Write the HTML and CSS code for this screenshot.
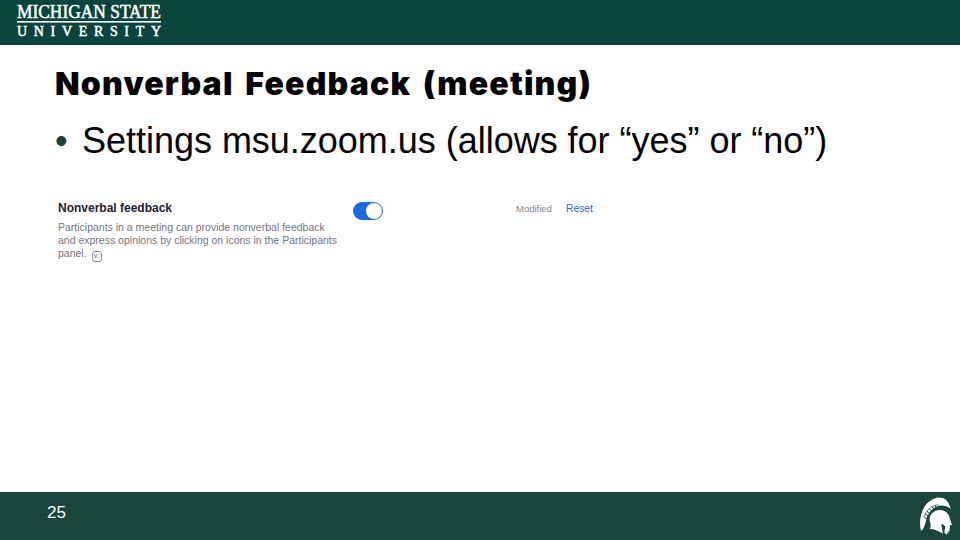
FILE: index.html
```
<!DOCTYPE html>
<html lang="en">
<head>
  <meta charset="UTF-8">
  <meta name="viewport" content="width=device-width, initial-scale=1.0">
  <title>Nonverbal Feedback (meeting)</title>
  <link rel="stylesheet" href="styles.css">
</head>
<body>
  <header>
    <svg class="wordmark" width="180" height="45" viewBox="0 0 180 45">
      <text class="name" x="17" y="18" textLength="144" lengthAdjust="spacingAndGlyphs">MICHIGAN STATE</text>
      <rect x="17" y="21" width="144" height="1.6"/>
      <text class="sub" x="17" y="35.5" textLength="144">UNIVERSITY</text>
    </svg>
  </header>

  <main>
    <h1>Nonverbal Feedback (meeting)</h1>
    <ul>
      <li>Settings msu.zoom.us (allows for “yes” or “no”)</li>
    </ul>

    <section class="setting">
      <div class="info">
        <h2>Nonverbal feedback</h2>
        <p>
          Participants in a meeting can provide nonverbal feedback<br>
          and express opinions by clicking on icons in the Participants<br>
          panel. <span class="badge">v:</span>
        </p>
      </div>
      <div class="toggle"><span class="knob"></span></div>
      <span class="modified">Modified</span>
      <a class="reset">Reset</a>
    </section>
  </main>

  <footer>
    <span class="page">25</span>
    <svg class="helmet" width="60" height="47" viewBox="0 21 180 141">
      <path d="M63 138 C59 122 59 102 65 84 C72 61 88 43 111 38 C131 35 146 45 152 71 C137 60 119 58 106 66 C91 75 81 91 78 107 C75 120 72 130 63 138 Z"/>
      <path d="M89 107 C87 88 102 75 120 75 C138 75 148 88 150 103 L156 120 L150 120 L149 135 L140 149 L133 143 L136 124 L127 117 L124 119 L129 146 C115 138 101 132 90 132 C94 122 91 115 89 107 Z"/>
      <path class="gap" d="M73 97 L81 101 M76 88 L85 93 M81 79 L89 85 M88 71 L95 78 M96 65 L102 72 M105 60 L109 67"/>
      <path class="crest" d="M71 97 C78 77 93 62 116 59"/>
    </svg>
  </footer>
</body>
</html>
```

FILE: styles.css
```
* {
  box-sizing: border-box;
}
body {
  margin: 0;
  height: 540px;
  display: flex;
  flex-direction: column;
  overflow: hidden;
  background: #fff;
  color: #000;
  font-family: "Liberation Sans", Arial, sans-serif;
}
header {
  height: 45px;
  background: #08453a;
}
.wordmark {
  display: block;
  fill: #fff;
  stroke: #fff;
  stroke-width: 0.5px;
  font-family: "Liberation Serif", serif;
}
.wordmark rect {
  stroke: none;
}
.name {
  font-size: 19px;
}
.sub {
  font-size: 14px;
}
main {
  flex: 1;
  padding: 20px 55px 0;
}
h1 {
  margin: 0;
  font-family: Inter, "Liberation Sans", sans-serif;
  font-size: 32px;
  font-weight: 900;
  line-height: 38px;
  letter-spacing: 1.2px;
  word-spacing: 4px;
  white-space: nowrap;
}
ul {
  margin: 18px 0 0;
  padding: 0;
  list-style: none;
}
li {
  display: flex;
  font-size: 36px;
  line-height: 40px;
  letter-spacing: -0.02px;
  white-space: nowrap;
}
li::before {
  content: "•";
  width: 27px;
  color: #18453b;
}
.setting {
  display: flex;
  align-items: flex-start;
  margin-top: 40px;
  padding-left: 3px;
}
.info {
  width: 295px;
  white-space: nowrap;
}
h2 {
  margin: 0;
  font-size: 12px;
  line-height: 14px;
  color: #232333;
}
p {
  margin: 6px 0 0;
  font-size: 10.5px;
  line-height: 13px;
  color: #747480;
}
.badge {
  display: inline-block;
  position: relative;
  top: -2px;
  width: 10px;
  height: 11px;
  margin-left: 2px;
  border: 1px solid #8b8b99;
  border-radius: 3px;
  font-size: 7px;
  line-height: 8px;
  text-align: center;
  vertical-align: -3px;
}
.toggle {
  display: flex;
  justify-content: flex-end;
  width: 30px;
  height: 18px;
  margin-top: 1px;
  padding: 1px;
  border-radius: 9px;
  background: #1a6be0;
}
.knob {
  width: 16px;
  height: 16px;
  border-radius: 50%;
  background: #fff;
}
.modified {
  width: 50px;
  margin-left: 133px;
  font-size: 9.5px;
  line-height: 16px;
  color: #82828c;
}
.reset {
  font-size: 10.3px;
  line-height: 15px;
  color: #1a6be0;
}
footer {
  display: flex;
  justify-content: space-between;
  height: 48px;
  padding-left: 47px;
  background: #1a453c;
  color: #fff;
}
.page {
  font-size: 17px;
  line-height: 41px;
}
.helmet {
  fill: #fff;
}
.gap {
  fill: none;
  stroke: #1a453c;
  stroke-width: 3;
}
.crest {
  fill: none;
  stroke: #1a453c;
  stroke-width: 2;
}
```
